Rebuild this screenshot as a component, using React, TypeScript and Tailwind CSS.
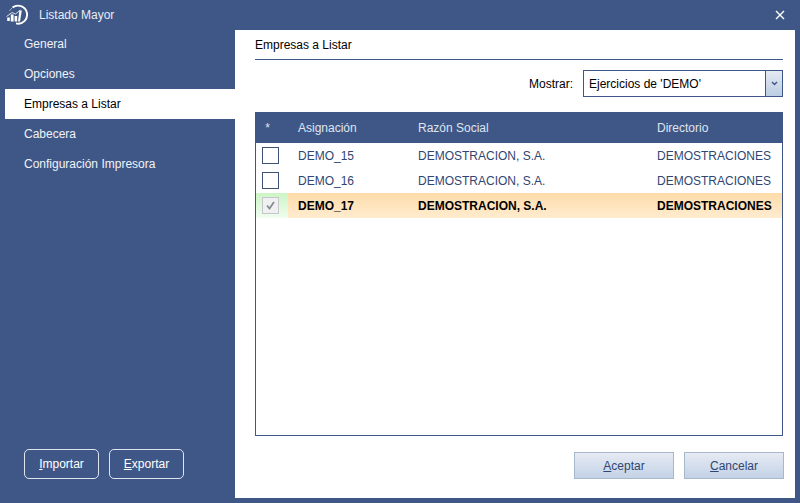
const menu = ['General', 'Opciones', 'Empresas a Listar', 'Cabecera', 'Configuración Impresora'];

const rows = [
  { code: 'DEMO_15', name: 'DEMOSTRACION, S.A.', dir: 'DEMOSTRACIONES', active: false },
  { code: 'DEMO_16', name: 'DEMOSTRACION, S.A.', dir: 'DEMOSTRACIONES', active: false },
  { code: 'DEMO_17', name: 'DEMOSTRACION, S.A.', dir: 'DEMOSTRACIONES', active: true },
];

function Logo() {
  return (
    <svg width="24" height="22" viewBox="0 0 24 22" className="ml-[5px]">
      <path d="M7.5 3.6A9 9 0 1 1 11 19.4" fill="none" stroke="#fff" strokeWidth="1.9" />
      <path d="M7 4A9 9 0 0 0 4.6 7" fill="none" stroke="#fff" strokeWidth="1" opacity="0.55" />
      <rect x="2.2" y="13.5" width="2.6" height="3.5" fill="#fff" />
      <rect x="5.8" y="10.5" width="2.8" height="7" fill="#fff" />
      <rect x="9.6" y="12" width="2.6" height="5.5" fill="#fff" />
      <path d="M14.4 6.5h2.4L15 17.5h-2z" fill="#fff" />
      <path d="M1.5 12.5 7 8.5l3.5 1.5 5-4" fill="none" stroke="#fff" strokeWidth="0.8" />
    </svg>
  );
}

function Check({ active }: { active: boolean }) {
  if (active) {
    return (
      <div className="w-[17px] h-[17px] border border-[#c4c8ce] bg-[#f0f0f0] flex items-center justify-center">
        <svg width="11" height="11" viewBox="0 0 11 11">
          <path d="M2 5.5 4.5 8.5 9 2" fill="none" stroke="#84898f" strokeWidth="1.7" />
        </svg>
      </div>
    );
  }
  return <div className="w-[17px] h-[17px] border border-[#3f5078] bg-white" />;
}

export default function App() {
  return (
    <div className="w-[800px] h-[503px] overflow-hidden bg-[#3f5787] flex flex-col text-[12px] font-['Liberation_Sans',Arial,sans-serif]">
      <div className="h-[30px] flex items-center shrink-0 text-[#e8ecf4]">
        <Logo />
        <span className="ml-[10px]">Listado Mayor</span>
        <svg width="10" height="10" viewBox="0 0 10 10" className="ml-auto mr-[15px]">
          <path d="M1 1 9 9M9 1 1 9" stroke="#fff" strokeWidth="1.4" />
        </svg>
      </div>

      <div className="flex flex-1 pr-[5px] pb-[5px] min-h-0">
        <div className="w-[235px] flex flex-col pl-[5px] pb-[19px] -mt-px">
          {menu.map((m) => (
            <div
              key={m}
              className={
                m === 'Empresas a Listar'
                  ? 'h-[30px] flex items-center pl-[19px] bg-white text-black'
                  : 'h-[30px] flex items-center pl-[19px] text-[#f0f3f8]'
              }
            >
              {m}
            </div>
          ))}
          <div className="mt-auto flex gap-[10px] pl-[19px]">
            <button className="w-[75px] h-[30px] border border-[#dfe5f0] rounded-[5px] text-white">
              <span className="underline">I</span>mportar
            </button>
            <button className="w-[75px] h-[30px] border border-[#dfe5f0] rounded-[5px] text-white">
              <span className="underline">E</span>xportar
            </button>
          </div>
        </div>

        <div className="flex-1 bg-white flex flex-col pl-[20px] pr-[12px] text-black">
          <div className="h-[30px] flex items-center border-b border-[#3f5787] shrink-0">Empresas a Listar</div>

          <div className="flex items-center justify-end mt-[10px] h-[27px] shrink-0">
            <span className="mr-[10px]">Mostrar:</span>
            <div className="w-[200px] h-[27px] border border-[#3f5787] flex items-stretch">
              <span className="flex-1 flex items-center pl-[5px]">Ejercicios de 'DEMO'</span>
              <div className="w-[17px] border-l border-[#3f5787] bg-gradient-to-b from-[#e4eaf3] to-[#bccde3] flex items-center justify-center">
                <svg width="7" height="5" viewBox="0 0 7 5">
                  <path d="M1 1 3.5 3.5 6 1" fill="none" stroke="#3f5787" strokeWidth="1.5" />
                </svg>
              </div>
            </div>
          </div>

          <div className="mt-[15px] h-[324px] border border-[#3f5787] border-t-0 shrink-0 flex flex-col">
            <div className="h-[31px] -mx-px bg-[#3f5787] text-[#dfe5f0] grid grid-cols-[25px_8px_120px_240px_1fr] items-center">
              <span className="text-center">*</span>
              <span />
              <span className="pl-[10px]">Asignación</span>
              <span className="pl-[10px]">Razón Social</span>
              <span className="pl-[9px]">Directorio</span>
            </div>
            {rows.map((r) => (
              <div
                key={r.code}
                className={
                  r.active
                    ? 'h-[25px] grid grid-cols-[32px_120px_240px_1fr] items-center font-bold text-black bg-gradient-to-b from-[#ffdcaa] to-[#ffeccf]'
                    : 'h-[25px] grid grid-cols-[32px_120px_240px_1fr] items-center text-[#2f4672]'
                }
              >
                <div
                  className={
                    r.active
                      ? 'h-full flex items-center justify-center pr-[4px] bg-gradient-to-b from-[#ccf5c5] to-[#f0fdee]'
                      : 'h-full flex items-center justify-center pr-[4px] bg-white'
                  }
                >
                  <Check active={r.active} />
                </div>
                <span className="pl-[10px]">{r.code}</span>
                <span className="pl-[10px]">{r.name}</span>
                <span className="pl-[9px] whitespace-nowrap">{r.dir}</span>
              </div>
            ))}
          </div>

          <div className="flex justify-end gap-[10px] mt-[16px] -mr-px">
            <button className="w-[100px] h-[27px] border border-[#a9b7cb] bg-gradient-to-b from-[#e6ebf4] to-[#c3d2e6] text-[#2f4672]">
              <span className="underline">A</span>ceptar
            </button>
            <button className="w-[100px] h-[27px] border border-[#a9b7cb] bg-gradient-to-b from-[#e6ebf4] to-[#c3d2e6] text-[#2f4672]">
              <span className="underline">C</span>ancelar
            </button>
          </div>
        </div>
      </div>
    </div>
  );
}
